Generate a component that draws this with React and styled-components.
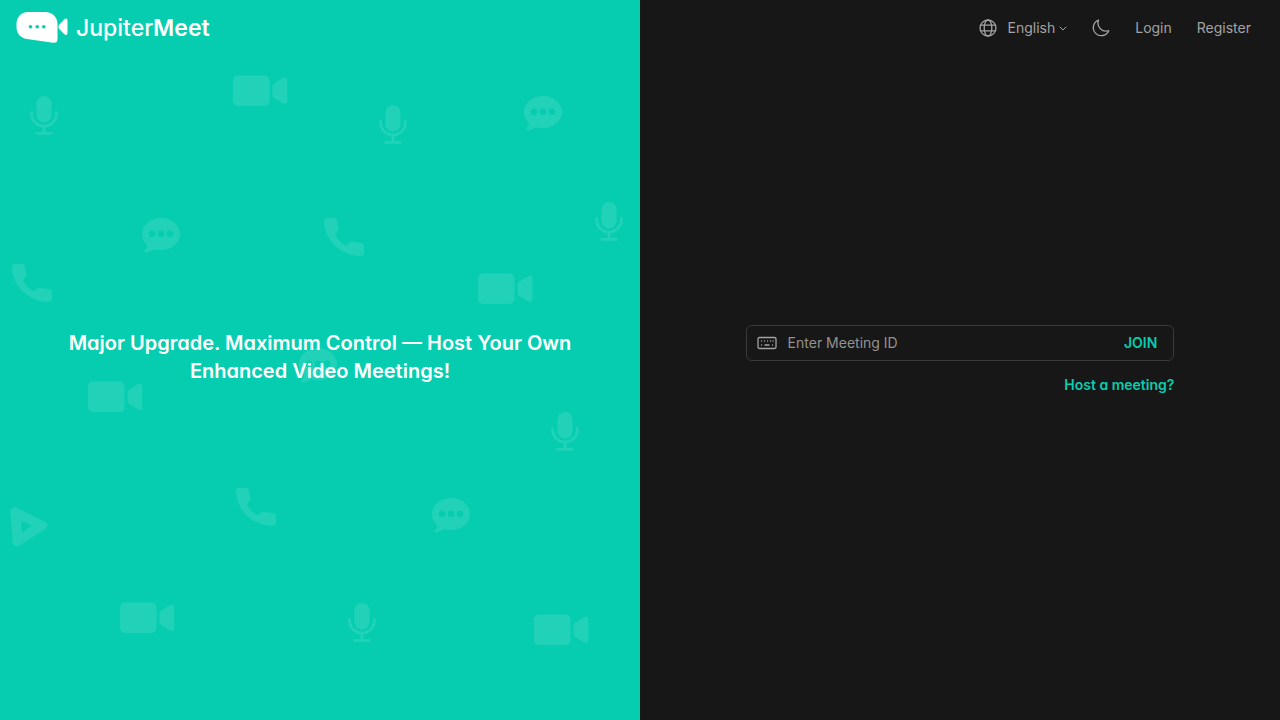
import React from "react";
import styled, { createGlobalStyle, ThemeProvider } from "styled-components";

const theme = {
  colors: {
    brand: "#07cdb0",
    dark: "#171717",
    text: "#a3a3a3",
    border: "#3a3a3a",
    white: "#ffffff",
  },
};

const GlobalStyle = createGlobalStyle`
  *, *::before, *::after {
    box-sizing: border-box;
  }

  body {
    margin: 0;
    background: ${(props) => props.theme.colors.dark};
    color: ${(props) => props.theme.colors.text};
    font-family: Inter, "Liberation Sans", sans-serif;
    font-feature-settings: "cv11";
    font-size: 14px;
    line-height: 20px;
  }
`;

const Page = styled.main`
  display: grid;
  grid-template-columns: 1fr 1fr;
  min-height: 100vh;

  @media (max-width: 720px) {
    grid-template-columns: 1fr;
  }
`;

const Hero = styled.section`
  position: relative;
  display: grid;
  grid-template-rows: 56px 1fr 62px;
  padding: 0 16px;
  background: ${(props) => props.theme.colors.brand};
  color: ${(props) => props.theme.colors.white};
`;

const Pattern = styled.svg`
  position: absolute;
  inset: 0;
  width: 100%;
  height: 100%;
  fill: #ffffff;
  opacity: 0.1;
`;

const Brand = styled.a`
  position: relative;
  display: flex;
  align-items: center;
  justify-self: start;
  gap: 8px;
  color: inherit;
  font-size: 23px;
  font-weight: 500;
  line-height: 32px;
  text-decoration: none;

  strong {
    font-weight: 600;
  }
`;

const Headline = styled.h1`
  position: relative;
  align-self: center;
  justify-self: center;
  max-width: 544px;
  margin: 0;
  font-size: 20px;
  font-weight: 600;
  line-height: 28px;
  text-align: center;
`;

const Panel = styled.section`
  display: grid;
  grid-template-rows: 56px 1fr 56px;
`;

const Nav = styled.nav`
  display: flex;
  align-items: center;
  justify-content: flex-end;
  gap: 25px;
  padding: 0 29px;
`;

const NavLink = styled.a`
  color: inherit;
  text-decoration: none;
`;

const NavButton = styled.button`
  display: flex;
  align-items: center;
  gap: ${(props) => props.$gap || "0"};
  padding: 0;
  border: 0;
  background: none;
  color: inherit;
  font: inherit;
  font-feature-settings: inherit;
  cursor: pointer;
`;

const Label = styled.span`
  display: flex;
  align-items: center;
  gap: 4px;
`;

const LineIcon = styled.svg`
  flex: none;
  fill: none;
  stroke: currentColor;
  stroke-linecap: round;
  stroke-linejoin: round;
`;

const JoinForm = styled.form`
  display: flex;
  flex-direction: column;
  align-self: center;
  justify-self: center;
  gap: 14px;
  width: 67%;
`;

const Field = styled.div`
  display: flex;
  align-items: center;
  height: 36px;
  padding: 0 16px 0 10px;
  gap: 11px;
  border: 1px solid ${(props) => props.theme.colors.border};
  border-radius: 6px;
`;

const MeetingInput = styled.input`
  flex: 1;
  min-width: 0;
  padding: 0;
  border: 0;
  outline: 0;
  background: none;
  color: inherit;
  font: inherit;
  font-feature-settings: inherit;

  &::placeholder {
    color: #929292;
    opacity: 1;
  }
`;

const JoinButton = styled.button`
  padding: 0;
  border: 0;
  background: none;
  color: ${(props) => props.theme.colors.brand};
  font: inherit;
  font-weight: 600;
  cursor: pointer;
`;

const HostLink = styled.a`
  align-self: flex-end;
  color: ${(props) => props.theme.colors.brand};
  font-weight: 600;
  text-decoration: none;
`;

const patternItems = [
  { type: "video", x: 233, y: 75 },
  { type: "mic", x: 30, y: 96 },
  { type: "mic", x: 379, y: 105 },
  { type: "chat", x: 524, y: 96 },
  { type: "mic", x: 595, y: 202 },
  { type: "chat", x: 142, y: 218 },
  { type: "phone", x: 324, y: 218 },
  { type: "phone", x: 12, y: 264 },
  { type: "video", x: 478, y: 273 },
  { type: "chat", x: 299, y: 348 },
  { type: "video", x: 88, y: 381 },
  { type: "mic", x: 551, y: 412 },
  { type: "phone", x: 236, y: 488 },
  { type: "chat", x: 432, y: 498 },
  { type: "play", x: 10, y: 507 },
  { type: "video", x: 120, y: 602 },
  { type: "mic", x: 348, y: 603 },
  { type: "video", x: 534, y: 614 },
];

const shapes = {
  video: (
    <>
      <rect y="0.5" width="36.5" height="30.5" rx="5" />
      <path d="M39.5 11.5Q39.5 9.5 41.2 8.5L49.5 3.5Q52.5 2 54.3 4V27.5Q52.5 29.5 49.5 28L41.2 23Q39.5 22 39.5 20Z" />
    </>
  ),
  mic: (
    <>
      <rect x="6.5" width="15" height="26.5" rx="7.5" />
      <path
        d="M1.6 16.5V18a12.4 12 0 0 0 24.8 0V16.5M14 30V37M6.5 37.3H21.5"
        fill="none"
        stroke="#ffffff"
        strokeWidth="2.8"
        strokeLinecap="round"
      />
    </>
  ),
  chat: (
    <path
      fillRule="evenodd"
      d="M19 0C29.5 0 38 7.2 38 16S29.5 32 19 32C16.5 32 14 31.7 12 31C9.5 33 6 34.5 3 34.3C1.7 34.2 1.6 33.5 2.4 32.8C4.7 30.8 5.4 28.5 4.5 26.5C1.6 23.8 0 20.1 0 16C0 7.2 8.5 0 19 0ZM10 12.6a3.3 3.3 0 1 0 0 6.6a3.3 3.3 0 1 0 0-6.6ZM19 12.6a3.3 3.3 0 1 0 0 6.6a3.3 3.3 0 1 0 0-6.6ZM28 12.6a3.3 3.3 0 1 0 0 6.6a3.3 3.3 0 1 0 0-6.6Z"
    />
  ),
  phone: (
    <path d="M3 0H10.5Q12.7 0 13 2C13.2 5 13.7 7.5 14.5 9.6Q15 11 14 12.2L11 16.5C13.5 21.5 17 25 21.5 27.5L26.5 24Q27.5 23.3 29 23.7C31.5 24.5 34 24.8 37.5 25Q40 25.2 40 27.5V35Q40 38 37 38C16 37.5 0.5 22 0 3Q0 0 3 0Z" />
  ),
  play: (
    <path
      fillRule="evenodd"
      d="M0.5 5C0.4 1 3.5-1 7 0.8L34.5 14.5C38.5 16.7 38.5 20 35 22.3L10 38C6 40.2 2.7 38.5 2.5 34.5ZM11 13.5L12 25.5L21.5 19Z"
    />
  ),
};

function HeroPattern() {
  return (
    <Pattern
      viewBox="0 0 640 720"
      preserveAspectRatio="xMidYMid slice"
      aria-hidden="true"
    >
      {patternItems.map(({ type, x, y }) => (
        <g key={`${x}-${y}`} transform={`translate(${x} ${y})`}>
          {shapes[type]}
        </g>
      ))}
    </Pattern>
  );
}

function LogoMark() {
  return (
    <svg width="52" height="32" viewBox="0 0 52 32" aria-hidden="true">
      <path
        d="M12 0H29C36.5 0 41.5 5 41.5 12V27Q41.5 31.3 37 30.8L11 27C4 26 0.5 21 0.5 15V12C0.5 5 5 0 12 0Z"
        fill="#ffffff"
      />
      <path
        d="M43 13L48 7.5Q51.5 5 51.5 9V20.5Q51.5 24.5 48 22L43 16.8Q41.8 15 43 13Z"
        fill="#ffffff"
      />
      <g fill="#07cdb0">
        <circle cx="14.5" cy="14.8" r="1.8" />
        <circle cx="21.2" cy="14.8" r="1.8" />
        <circle cx="27.8" cy="14.8" r="1.8" />
      </g>
    </svg>
  );
}

function GlobeIcon() {
  return (
    <LineIcon
      width="18"
      height="18"
      viewBox="0 0 18 18"
      strokeWidth="1.3"
      aria-hidden="true"
    >
      <circle cx="9" cy="9" r="8" />
      <ellipse cx="9" cy="9" rx="3.8" ry="8" />
      <path d="M1.6 6.2H16.4M1.6 11.8H16.4" />
    </LineIcon>
  );
}

function ChevronIcon() {
  return (
    <LineIcon width="8" height="8" viewBox="0 0 8 8" aria-hidden="true">
      <path d="M1 3L4 6L7 3" />
    </LineIcon>
  );
}

function MoonIcon() {
  return (
    <LineIcon
      width="18"
      height="18"
      viewBox="0 0 18 18"
      strokeWidth="1.3"
      aria-hidden="true"
    >
      <path d="M6.5 1.2A8 8 0 1 0 16.8 11.5A8 8 0 0 1 6.5 1.2Z" />
    </LineIcon>
  );
}

function KeyboardIcon() {
  return (
    <LineIcon
      width="20"
      height="20"
      viewBox="0 0 20 20"
      strokeWidth="1.3"
      aria-hidden="true"
    >
      <rect x="1" y="4.5" width="18" height="11" rx="1.5" />
      <path d="M4.5 8H4.6M7.5 8H7.6M10.5 8H10.6M13.5 8H13.6M16 8H16.1M4.5 12H4.6M8 12H12M15.5 12H15.6" />
    </LineIcon>
  );
}

function App() {
  return (
    <ThemeProvider theme={theme}>
      <GlobalStyle />
      <Page>
        <Hero>
          <HeroPattern />
          <Brand href="#">
            <LogoMark />
            <span>
              Jupiter<strong>Meet</strong>
            </span>
          </Brand>
          <Headline>
            Major Upgrade. Maximum Control — Host Your Own Enhanced Video
            Meetings!
          </Headline>
        </Hero>

        <Panel>
          <Nav>
            <NavButton type="button" $gap="10px">
              <GlobeIcon />
              <Label>
                English
                <ChevronIcon />
              </Label>
            </NavButton>
            <NavButton type="button" aria-label="Toggle theme">
              <MoonIcon />
            </NavButton>
            <NavLink href="#login">Login</NavLink>
            <NavLink href="#register">Register</NavLink>
          </Nav>

          <JoinForm onSubmit={(event) => event.preventDefault()}>
            <Field>
              <KeyboardIcon />
              <MeetingInput
                type="text"
                aria-label="Meeting ID"
                placeholder="Enter Meeting ID"
              />
              <JoinButton type="submit">JOIN</JoinButton>
            </Field>
            <HostLink href="#host">Host a meeting?</HostLink>
          </JoinForm>
        </Panel>
      </Page>
    </ThemeProvider>
  );
}

export default App;
